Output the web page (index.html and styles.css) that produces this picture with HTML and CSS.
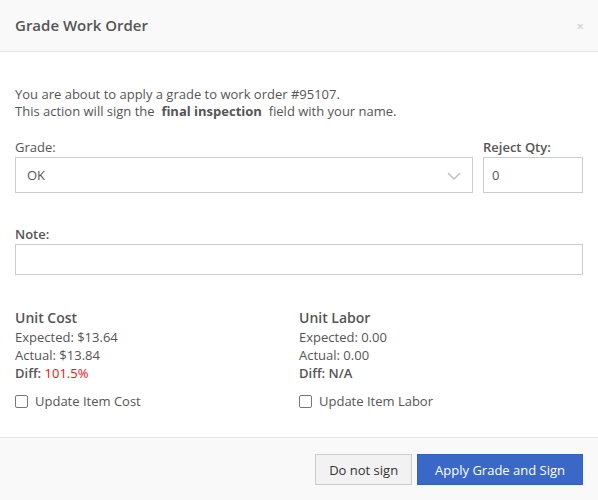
FILE: index.html
```html
<!DOCTYPE html>
<html lang="en">
<head>
<meta charset="utf-8">
<title>Grade Work Order</title>
<link rel="stylesheet" href="styles.css">
</head>
<body>
<div class="modal">
  <div class="modal-header">
    <h4 class="modal-title">Grade Work Order</h4>
    <span class="close">&times;</span>
  </div>
  <div class="modal-body">
    <p class="intro">You are about to apply a grade to work order #95107.<br>This action will sign the <b>&nbsp;final inspection&nbsp;</b> field with your name.</p>
    <div class="grade-row">
      <div class="field grow">
        <label class="lbl">Grade:</label>
        <div class="select">
          <span>OK</span>
          <svg class="chev" width="14" height="8" viewBox="0 0 14 8"><path d="M1 1l6 6 6-6" fill="none" stroke="#bbb" stroke-width="1.3"/></svg>
        </div>
      </div>
      <div class="field qty">
        <label class="lbl strong">Reject Qty:</label>
        <div class="input tall">0</div>
      </div>
    </div>
    <div class="field note">
      <label class="lbl strong">Note:</label>
      <div class="input short"></div>
    </div>
    <div class="cols">
      <div class="col">
        <h5 class="col-title">Unit Cost</h5>
        <div class="line">Expected: $13.64</div>
        <div class="line">Actual: $13.84</div>
        <div class="line"><b>Diff:</b> <span class="bad">101.5%</span></div>
        <label class="check"><span class="box"></span>Update Item Cost</label>
      </div>
      <div class="col">
        <h5 class="col-title">Unit Labor</h5>
        <div class="line">Expected: 0.00</div>
        <div class="line">Actual: 0.00</div>
        <div class="line"><b>Diff: N/A</b></div>
        <label class="check"><span class="box"></span>Update Item Labor</label>
      </div>
    </div>
  </div>
  <div class="modal-footer">
    <button class="btn btn-default">Do not sign</button>
    <button class="btn btn-primary">Apply Grade and Sign</button>
  </div>
</div>
</body>
</html>
```

FILE: styles.css
```css
* { box-sizing: border-box; }

html, body {
  margin: 0;
  padding: 0;
  background: #fff;
}

body {
  font-family: "Open Sans", "Liberation Sans", sans-serif;
  font-size: 13px;
  color: #555;
  width: 598px;
  height: 500px;
  overflow: hidden;
}

.modal {
  display: flex;
  flex-direction: column;
  height: 500px;
}

.modal-header {
  height: 52px;
  background: #f9f9f9;
  border-bottom: 1px solid #e5e5e5;
  display: flex;
  align-items: center;
  justify-content: space-between;
  padding: 0 15px 0 15px;
}

.modal-title {
  margin: 0;
  font-size: 15px;
  font-weight: 600;
  color: #555;
  line-height: 20px;
  padding-bottom: 2px;
}

.close {
  color: #c8c8c8;
  font-size: 13px;
  line-height: 1;
  margin-right: -1px;
  margin-top: 2px;
}

.modal-body {
  flex: 1;
  padding: 34px 15px 0 15px;
}

.intro {
  margin: 0;
  line-height: 17px;
}

.intro b { font-weight: 700; }

.grade-row {
  display: flex;
  gap: 10px;
  margin-top: 19px;
}

.field { display: flex; flex-direction: column; }
.grow { flex: 1; }
.qty { width: 100px; }

.lbl {
  display: block;
  line-height: 17px;
  margin-bottom: 1px;
}

.strong { font-weight: 600; }

.select {
  height: 36px;
  border: 1px solid #ccc;
  display: flex;
  align-items: center;
  justify-content: space-between;
  padding: 0 11px 0 11px;
}

.chev { margin-top: 1px; }

.input {
  border: 1px solid #ccc;
  padding: 0 8px;
  display: flex;
  align-items: center;
}

.tall { height: 36px; }
.short { height: 31px; }

.note { margin-top: 33px; }

.cols {
  display: grid;
  grid-template-columns: 1fr 1fr;
  margin-top: 33px;
}

.col-title {
  margin: 0 0 1px 0;
  font-size: 14px;
  font-weight: 600;
  line-height: 19px;
}

.line { line-height: 18px; }
.line b { font-weight: 600; }

.bad { color: #f01010; }

.check {
  display: flex;
  align-items: center;
  gap: 7px;
  margin-top: 10px;
  line-height: 18px;
}

.box {
  width: 13px;
  height: 13px;
  border: 1px solid #777;
  border-radius: 2px;
  background: #fff;
}

.modal-footer {
  height: 63px;
  background: #f9f9f9;
  border-top: 1px solid #e5e5e5;
  display: flex;
  justify-content: flex-end;
  align-items: flex-start;
  gap: 5px;
  padding: 16px 15px 0 15px;
}

.btn {
  font-family: inherit;
  font-size: 13px;
  height: 31px;
  border: 1px solid;
  border-radius: 0;
  cursor: pointer;
}

.btn-default {
  background: #f2f2f2;
  border-color: #ccc;
  color: #333;
  padding: 0 13px;
}

.btn-primary {
  background: #3a67c8;
  border-color: #3461be;
  color: #fff;
  padding: 0 17px;
}
```
